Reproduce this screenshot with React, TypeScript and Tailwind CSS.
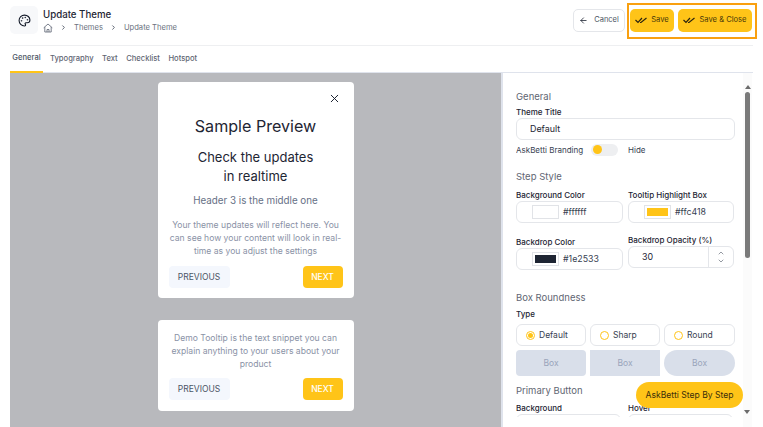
import React from "react";
import { ArrowLeft, ChevronDown, ChevronRight, ChevronUp, Palette, X } from "lucide-react";

const font = { fontFamily: "Inter, sans-serif" };

function Label({ children }: { children: React.ReactNode }) {
  return <div className="text-[8px] leading-[11px] font-medium whitespace-nowrap text-[#1e2533]">{children}</div>;
}

function SectionTitle({ children }: { children: React.ReactNode }) {
  return <div className="text-[9.5px] leading-[12px] text-[#5f6673]">{children}</div>;
}

function DoubleCheck() {
  return (
    <svg width="12" height="7" viewBox="0 0 12 7" fill="none" stroke="#2b2410" strokeWidth="1.2">
      <path d="M0.5 3 L3 5.5 L7 1" />
      <path d="M5 5.5 L6 5.5 L11.5 1" />
    </svg>
  );
}

function HomeIcon() {
  return (
    <svg width="10" height="10" viewBox="0 0 10 10" fill="none" stroke="#6b7280" strokeWidth="0.9">
      <path d="M0.7 4.8 L5 1 L9.3 4.8" />
      <path d="M1.8 4 V9 H8.2 V4" />
      <path d="M4 9 V6.5 H6 V9" />
    </svg>
  );
}

function ColorField({ color, value }: { color: string; value: string }) {
  return (
    <div className="flex h-[22px] items-center rounded-[6px] border border-[#e4e6ea] pl-[15px]">
      <div className="flex h-[14px] w-[27px] items-center justify-center border border-[#e1e3e7] bg-white">
        <div className="h-[8px] w-[21px]" style={{ backgroundColor: color }} />
      </div>
      <span className="ml-[4px] text-[8.8px] text-[#374151]">{value}</span>
    </div>
  );
}

function Radio({ label, checked, width }: { label: string; checked?: boolean; width: string }) {
  return (
    <div className={`flex h-[22px] items-center rounded-[6px] border border-[#e4e6ea] pl-[9px] ${width}`}>
      <span className="flex h-[9px] w-[9px] items-center justify-center rounded-full border border-[#ffc418]">
        {checked && <span className="h-[5px] w-[5px] rounded-full bg-[#ffc418]" />}
      </span>
      <span className="ml-[4px] text-[8.5px] text-[#374151]">{label}</span>
    </div>
  );
}

function TooltipButtons() {
  return (
    <div className="flex items-center justify-between">
      <div className="flex h-[22px] w-[61px] items-center justify-center rounded-[4px] bg-[#f4f7fd] text-[8.5px] text-[#4b5565]">PREVIOUS</div>
      <div className="flex h-[22px] w-[40px] items-center justify-center rounded-[4px] bg-[#ffc418] text-[8.5px] font-medium text-white">NEXT</div>
    </div>
  );
}

export default function App() {
  return (
    <div className="relative flex h-[427px] w-[763px] flex-col overflow-hidden bg-white" style={font}>
      <header className="mx-[10px] flex h-[46px] shrink-0 items-center justify-between border-b border-[#eeeff1] pr-[1px] pb-[5px]">
        <div className="flex items-center gap-[5px]">
          <div className="flex h-[28px] w-[28px] items-center justify-center rounded-[5px] bg-[#f7f8fa]">
            <Palette size={13} strokeWidth={2} className="text-[#111827]" />
          </div>
          <div className="pt-[1px]">
            <div className="text-[9.7px] leading-[14px] font-medium text-[#1e2533]">Update Theme</div>
            <div className="flex items-center text-[7.6px] leading-[12px] text-[#6b7280]">
              <HomeIcon />
              <ChevronRight size={7} strokeWidth={3} className="mx-[7px] text-[#4b5563]" />
              <span>Themes</span>
              <ChevronRight size={7} strokeWidth={3} className="mx-[7px] text-[#4b5563]" />
              <span>Update Theme</span>
            </div>
          </div>
        </div>
        <div className="flex items-center gap-[4px]">
          <div className="mr-[1px] flex h-[23px] w-[52px] items-center justify-center gap-[6px] rounded-[5px] border border-[#e4e6ea] text-[7.5px] text-[#4b5563]">
            <ArrowLeft size={9} className="text-[#111827]" />
            Cancel
          </div>
          <div className="flex h-[23px] w-[44px] items-center justify-center gap-[4px] rounded-[5px] bg-[#ffc418] text-[7.6px] text-[#4a3a0a]">
            <DoubleCheck />
            Save
          </div>
          <div className="flex h-[23px] w-[74px] items-center justify-center gap-[4px] rounded-[5px] bg-[#ffc418] text-[7.6px] text-[#4a3a0a]">
            <DoubleCheck />
            Save &amp; Close
          </div>
        </div>
      </header>

      <nav className="mx-[10px] flex h-[27px] shrink-0 items-start gap-[8.5px] border-b border-[#dfe3ec] text-[7.6px] font-medium text-[#5f6673]">
        <div className="-mr-[1.5px] -mb-[1px] flex h-[27px] w-[33px] items-center justify-center border-b-2 border-[#ffc418] pb-[1px] text-[#4b5563]">General</div>
        {["Typography", "Text", "Checklist", "Hotspot"].map((tab) => (
          <div key={tab} className="flex h-[25px] items-center">{tab}</div>
        ))}
      </nav>

      <div className="flex min-h-0 flex-1 pl-[10px]">
        <main className="flex w-[491px] shrink-0 flex-col items-center gap-[22px] bg-[#b8b9bd] pt-[9px]">
          <div className="w-[196px] shrink-0 rounded-[4px] bg-white px-[11px] pt-[10px] pb-[10px]">
            <div className="flex justify-end pr-[2px]"><X size={13} strokeWidth={1.75} className="text-[#111827]" /></div>
            <div className="mt-[10px] text-center text-[16.1px] leading-[22px] text-[#1e2533]">Sample Preview</div>
            <div className="mt-[11px] text-center text-[13px] leading-[19px] text-[#1e2533]">Check the updates<br />in realtime</div>
            <div className="mt-[8px] text-center text-[9.8px] leading-[14px] text-[#667085]">Header 3 is the middle one</div>
            <div className="-mx-[3px] mt-[11px] text-center text-[8.6px] leading-[13px] text-[#8a92a6]">
              Your theme updates will reflect here. You can see how your content will look in real-time as you adjust the settings
            </div>
            <div className="mt-[8px]"><TooltipButtons /></div>
          </div>
          <div className="w-[196px] shrink-0 rounded-[4px] bg-white px-[11px] pt-[12px] pb-[11px]">
            <div className="-mx-[3px] text-center text-[8.6px] leading-[13px] text-[#8a92a6]">
              Demo Tooltip is the text snippet you can explain anything to your users about your product
            </div>
            <div className="mt-[7px]"><TooltipButtons /></div>
          </div>
        </main>

        <aside className="flex min-w-0 flex-1 overflow-hidden border-l-2 border-[#dfe3ec]">
          <div className="ml-[13px] h-[344px] w-[219px] shrink-0 overflow-hidden pt-[18px]">
            <SectionTitle>General</SectionTitle>
            <div className="mt-[4px]"><Label>Theme Title</Label></div>
            <div className="flex h-[22px] items-center rounded-[6px] border border-[#e4e6ea] pl-[13px] text-[8.9px] text-[#1e2533]">Default</div>
            <div className="mt-[4px] flex h-[11px] items-center text-[8px] whitespace-nowrap text-[#374151]">
              <span className="w-[75px]">AskBetti Branding</span>
              <div className="flex h-[12px] w-[27px] items-center rounded-full bg-[#eeeff1] pl-[2px]">
                <div className="h-[9px] w-[9px] rounded-full bg-[#ffc418]" />
              </div>
              <span className="ml-[10px]">Hide</span>
            </div>

            <div className="mt-[16px]"><SectionTitle>Step Style</SectionTitle></div>
            <div className="mt-[7px] grid grid-cols-[107px_106px] gap-x-[5px]">
              <div>
                <Label>Background Color</Label>
                <ColorField color="#ffffff" value="#ffffff" />
              </div>
              <div>
                <Label>Tooltip Highlight Box</Label>
                <ColorField color="#ffc418" value="#ffc418" />
              </div>
              <div className="mt-[14px]">
                <Label>Backdrop Color</Label>
                <ColorField color="#1e2533" value="#1e2533" />
              </div>
              <div className="mt-[12px]">
                <Label>Backdrop Opacity (%)</Label>
                <div className="flex h-[22px] items-center justify-between rounded-[6px] border border-[#e4e6ea] pl-[13px] text-[8.9px] text-[#1e2533]">
                  30
                  <div className="flex h-full w-[25px] flex-col items-center justify-center border-l border-[#e4e6ea] text-[#5f6673]">
                    <ChevronUp size={8} />
                    <ChevronDown size={8} />
                  </div>
                </div>
              </div>
            </div>

            <div className="mt-[22px]"><SectionTitle>Box Roundness</SectionTitle></div>
            <div className="mt-[5px]"><Label>Type</Label></div>
            <div className="mt-[4px] flex gap-[4px]">
              <Radio label="Default" checked width="w-[70px]" />
              <Radio label="Sharp" width="w-[70px]" />
              <Radio label="Round" width="w-[71px]" />
            </div>
            <div className="mt-[4px] flex gap-[4px] text-[8.5px] text-[#9aa5bb]">
              <div className="flex h-[26px] w-[70px] items-center justify-center rounded-[4px] bg-[#d9dfea]">Box</div>
              <div className="flex h-[26px] w-[70px] items-center justify-center bg-[#d9dfea]">Box</div>
              <div className="flex h-[26px] w-[71px] items-center justify-center rounded-full bg-[#d9dfea]">Box</div>
            </div>
            <div className="mt-[9px]"><SectionTitle>Primary Button</SectionTitle></div>
            <div className="mt-[6px] grid grid-cols-[105px_105px] gap-x-[7px]">
              <div>
                <Label>Background</Label>
                <div className="h-[22px] rounded-[6px] border border-[#e4e6ea]" />
              </div>
              <div>
                <Label>Hover</Label>
                <div className="h-[22px] rounded-[6px] border border-[#e4e6ea]" />
              </div>
            </div>
          </div>
          <div className="ml-[8px] flex w-[9px] shrink-0 flex-col items-center bg-[#fbfbfb] pt-[12px]">
            <div className="h-0 w-0 border-x-[3px] border-b-[4px] border-x-transparent border-b-[#6b6b6b]" />
            <div className="mt-[3px] h-[166px] w-[5px] shrink-0 rounded-full bg-[#7a7a7a]" />
          </div>
        </aside>
      </div>

      <div className="absolute top-[410px] left-[744px] h-0 w-0 border-x-[3px] border-t-[4px] border-x-transparent border-t-[#6b6b6b]" />
      <div className="absolute top-[3px] left-[627px] h-[36px] w-[130px] border-[2px] border-[#f9a010]" />
      <div className="absolute top-[382px] left-[636px] flex h-[26px] w-[107px] items-center justify-center rounded-full bg-[#ffc418] text-[8.6px] text-[#3c2f0a]">AskBetti Step By Step</div>
    </div>
  );
}
